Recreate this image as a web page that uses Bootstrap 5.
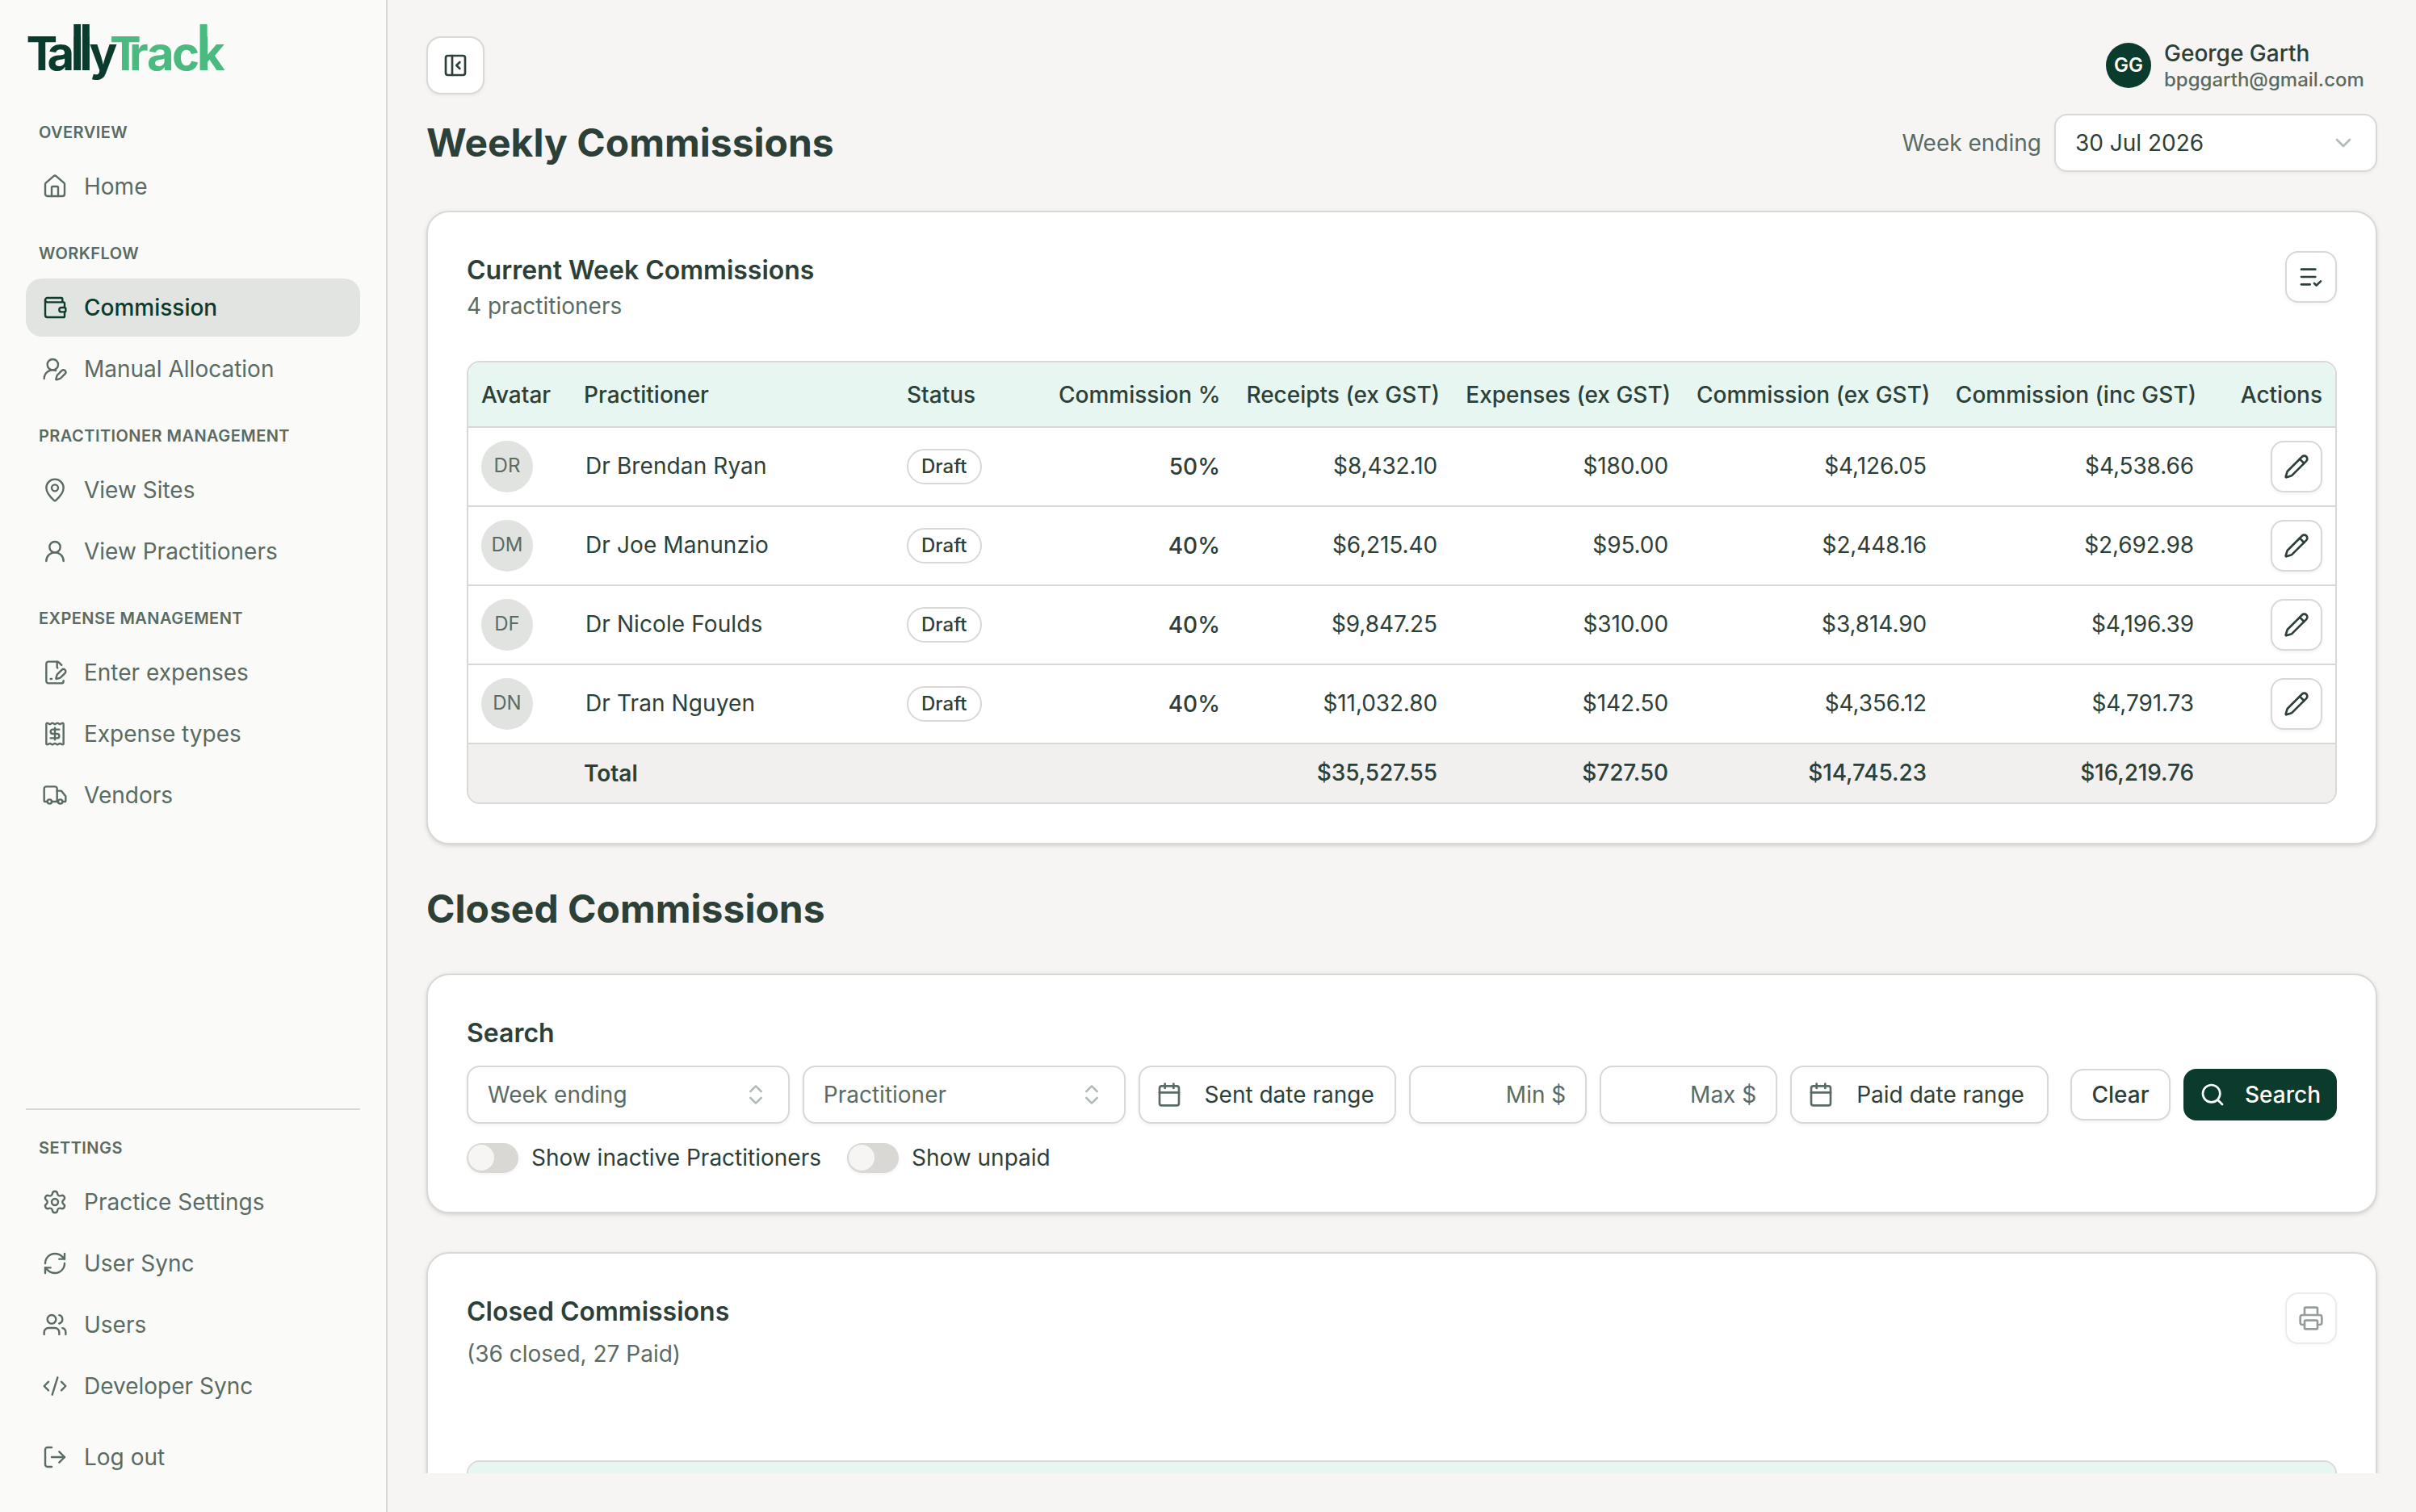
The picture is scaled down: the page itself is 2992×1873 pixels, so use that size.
<!DOCTYPE html>
<html lang="en">
<head>
    <meta charset="UTF-8">
    <meta name="viewport" content="width=device-width, initial-scale=1.0">
    <title>TallyTrack - Weekly Commissions</title>
    <link href="https://cdn.jsdelivr.net/npm/bootstrap@5.3.3/dist/css/bootstrap.min.css" rel="stylesheet">
    <style>
        :root {
            --ink: #2d4038;
            --brand: #0b3b2c;
            --soft: #5a6b63;
            --line: #d9d8d4;
        }

        body {
            height: 1873px;
            overflow: hidden;
            background-color: #f6f5f3;
            color: var(--ink);
            font-family: Inter, "Liberation Sans", sans-serif;
            font-size: 28px;
            line-height: 40px;
        }

        .icon {
            width: 32px;
            height: 32px;
            flex: none;
            fill: none;
            stroke: currentColor;
            stroke-width: 2;
            stroke-linecap: round;
            stroke-linejoin: round;
        }

        /* sidebar */
        .sidebar {
            width: 480px;
            height: 1873px;
            padding: 0 32px 32px;
            background-color: #fafaf8;
            border-right: 2px solid var(--line);
        }
        .brand-logo {
            display: block;
            width: 280px;
            height: 117px;
            margin-left: -32px;
            font-weight: 700;
            font-size: 58px;
        }
        .side-label {
            height: 64px;
            margin-top: 14px;
            padding-left: 16px;
            line-height: 66px;
            font-size: 20px;
            font-weight: 600;
            letter-spacing: .45px;
            text-transform: uppercase;
            color: var(--soft);
        }
        .side-menu {
            gap: 4px;
        }
        .side-menu .nav-link {
            display: flex;
            align-items: center;
            gap: 20px;
            height: 72px;
            padding: 0 20px;
            border-radius: 20px;
            color: var(--soft);
        }
        .side-menu .icon {
            stroke-width: 1.8;
        }
        .side-menu .nav-link.active {
            background-color: #e2e4e1;
            color: var(--brand);
            font-weight: 500;
        }
        .side-bottom {
            border-top: 2px solid var(--line);
        }

        /* main column */
        .content {
            height: 1825px;
            padding: 45px 48px 0;
            overflow: hidden;
        }
        .page-title {
            margin: 0;
            font-size: 48px;
            line-height: 64px;
            font-weight: 700;
        }
        .box-btn {
            display: flex;
            align-items: center;
            justify-content: center;
            width: 64px;
            height: 64px;
            padding: 0;
            background-color: #fff;
            border: 2px solid var(--line);
            border-radius: 16px;
            color: var(--ink);
            box-shadow: 0 2px 4px rgba(0, 0, 0, .05);
        }
        .box-btn.toggle {
            width: 72px;
            height: 72px;
            border-radius: 18px;
        }
        .user-pic {
            width: 56px;
            height: 56px;
            background-color: var(--brand);
            color: #fff;
            font-size: 24px;
            font-weight: 600;
        }
        .user-name,
        .user-mail {
            min-width: 248px;
            font-weight: 500;
        }
        .user-name { line-height: 36px; }
        .user-mail { font-size: 24px; line-height: 30px; }
        .field {
            display: flex;
            align-items: center;
            justify-content: space-between;
            height: 72px;
            padding: 0 24px;
            background-color: #fff;
            border: 2px solid var(--line);
            border-radius: 16px;
            box-shadow: 0 2px 4px rgba(0, 0, 0, .05);
            white-space: nowrap;
        }
        .field .caret {
            color: #b4bcb7;
        }
        .w-select { width: 400px; }
        .w-date { width: 320px; padding: 0 20px; justify-content: flex-start; gap: 28px; }
        .w-amount { width: 220px; justify-content: flex-end; }
        .soft { color: var(--soft); }

        .panel {
            padding: 48px;
            background-color: #fff;
            border: 2px solid var(--line);
            border-radius: 28px;
            box-shadow: 0 2px 6px rgba(0, 0, 0, .1), 0 2px 4px -2px rgba(0, 0, 0, .1);
        }
        .panel-title {
            margin: 0;
            font-size: 32px;
            line-height: 48px;
            font-weight: 600;
        }
        .closed-head { height: 208px; }

        /* commissions table */
        .grid-frame {
            border: 2px solid var(--line);
            border-radius: 16px;
            overflow: hidden;
        }
        .commissions {
            width: 100%;
            table-layout: fixed;
            border-collapse: separate;
            border-spacing: 0;
        }
        .commissions th,
        .commissions td {
            padding: 0 16px;
            white-space: nowrap;
            vertical-align: middle;
        }
        .commissions th {
            height: 81px;
            background-color: #e7f6f1;
            border-bottom: 2px solid var(--line);
            font-weight: 500;
        }
        .commissions tbody td {
            height: 98px;
            border-bottom: 2px solid var(--line);
        }
        .commissions tfoot td {
            height: 72px;
            background-color: #f1f0ee;
            font-weight: 500;
        }
        .commissions td.money {
            padding-right: 19px;
            padding-bottom: 2px;
            text-align: right;
            letter-spacing: -0.1px;
        }
        .commissions td.who {
            padding-left: 18px;
            padding-bottom: 2px;
            letter-spacing: .1px;
        }
        .initials {
            width: 64px;
            height: 64px;
            padding-bottom: 2px;
            background-color: #e1e3e0;
            color: var(--soft);
            font-size: 24px;
        }
        .state-pill {
            display: inline-block;
            height: 44px;
            padding: 0 16px;
            border: 2px solid var(--line);
            border-radius: 22px;
            font-size: 24px;
            font-weight: 500;
            line-height: 40px;
            vertical-align: middle;
        }

        /* search form */
        .search-btn {
            display: flex;
            align-items: center;
            height: 64px;
            padding: 0 20px;
            border-radius: 16px;
            gap: 24px;
            background-color: var(--brand);
            color: #fff;
            font-weight: 500;
        }
        .clear-btn {
            width: 124px;
            margin-left: 11px;
            font-size: 28px;
            font-weight: 500;
        }
        .switch-row {
            height: 37px;
        }
        .switch {
            width: 64px;
            height: 37px;
            padding: 2px;
            border-radius: 19px;
            background-color: var(--line);
            box-shadow: 0 2px 4px rgba(0, 0, 0, .05);
        }
        .switch::before {
            content: "";
            display: block;
            width: 32px;
            height: 32px;
            border-radius: 50%;
            background-color: #f6f5f3;
        }
        .switch-text {
            margin-right: 32px;
            padding-bottom: 2px;
        }
    </style>
</head>
<body>

    <!-- icon set -->
    <svg class="d-none">
        <symbol id="i-home" viewBox="0 0 24 24"><path d="M15 21v-8a1 1 0 0 0-1-1h-4a1 1 0 0 0-1 1v8"/><path d="M3 10a2 2 0 0 1 .709-1.528l7-6a2 2 0 0 1 2.582 0l7 6A2 2 0 0 1 21 10v9a2 2 0 0 1-2 2H5a2 2 0 0 1-2-2z"/></symbol>
        <symbol id="i-wallet" viewBox="0 0 24 24"><path d="M19 7V4a1 1 0 0 0-1-1H5a2 2 0 0 0 0 4h15a1 1 0 0 1 1 1v4h-3a2 2 0 0 0 0 4h3a1 1 0 0 0 1-1v-2a1 1 0 0 0-1-1"/><path d="M3 5v14a2 2 0 0 0 2 2h15a1 1 0 0 0 1-1v-4"/></symbol>
        <symbol id="i-user-pen" viewBox="0 0 24 24"><path d="M2 21a8 8 0 0 1 10.821-7.487"/><path d="M21.378 16.626a1 1 0 0 0-3.004-3.004l-4.01 4.012a2 2 0 0 0-.506.854l-.837 2.87a.5.5 0 0 0 .62.62l2.87-.837a2 2 0 0 0 .854-.506z"/><circle cx="10" cy="8" r="5"/></symbol>
        <symbol id="i-pin" viewBox="0 0 24 24"><path d="M20 10c0 4.993-5.539 10.193-7.399 11.799a1 1 0 0 1-1.202 0C9.539 20.193 4 14.993 4 10a8 8 0 0 1 16 0"/><circle cx="12" cy="10" r="3"/></symbol>
        <symbol id="i-user" viewBox="0 0 24 24"><circle cx="12" cy="8" r="5"/><path d="M20 21a8 8 0 0 0-16 0"/></symbol>
        <symbol id="i-file-pen" viewBox="0 0 24 24"><path d="M14.364 13.634a2 2 0 0 0-.506.854l-.837 2.87a.5.5 0 0 0 .62.62l2.87-.837a2 2 0 0 0 .854-.506l4.013-4.009a1 1 0 0 0-3.004-3.004z"/><path d="M14.487 7.858A1 1 0 0 1 14 7V2"/><path d="M20 19.645V20a2 2 0 0 1-2 2H6a2 2 0 0 1-2-2V4a2 2 0 0 1 2-2h8a2.4 2.4 0 0 1 1.704.706l2.516 2.516"/><path d="M8 18h1"/></symbol>
        <symbol id="i-receipt" viewBox="0 0 24 24"><path d="M4 3a1 1 0 0 1 1-1 1.3 1.3 0 0 1 .7.2l.933.6a1.3 1.3 0 0 0 1.4 0l.934-.6a1.3 1.3 0 0 1 1.4 0l.933.6a1.3 1.3 0 0 0 1.4 0l.933-.6a1.3 1.3 0 0 1 1.4 0l.934.6a1.3 1.3 0 0 0 1.4 0l.933-.6A1.3 1.3 0 0 1 19 2a1 1 0 0 1 1 1v18a1 1 0 0 1-1 1 1.3 1.3 0 0 1-.7-.2l-.933-.6a1.3 1.3 0 0 0-1.4 0l-.934.6a1.3 1.3 0 0 1-1.4 0l-.933-.6a1.3 1.3 0 0 0-1.4 0l-.933.6a1.3 1.3 0 0 1-1.4 0l-.934-.6a1.3 1.3 0 0 0-1.4 0l-.933.6a1.3 1.3 0 0 1-.7.2 1 1 0 0 1-1-1z"/><path d="M16 8h-6a2 2 0 1 0 0 4h4a2 2 0 1 1 0 4H8"/><path d="M12 17.5v-11"/></symbol>
        <symbol id="i-truck" viewBox="0 0 24 24"><path d="M14 18V6a2 2 0 0 0-2-2H4a2 2 0 0 0-2 2v11a1 1 0 0 0 1 1h2"/><path d="M15 18H9"/><path d="M19 18h2a1 1 0 0 0 1-1v-3.65a1 1 0 0 0-.22-.624l-3.48-4.35A1 1 0 0 0 17.52 8H14"/><circle cx="17" cy="18" r="2"/><circle cx="7" cy="18" r="2"/></symbol>
        <symbol id="i-gear" viewBox="0 0 24 24"><path d="M9.671 4.136a2.34 2.34 0 0 1 4.659 0 2.34 2.34 0 0 0 3.319 1.915 2.34 2.34 0 0 1 2.33 4.033 2.34 2.34 0 0 0 0 3.831 2.34 2.34 0 0 1-2.33 4.033 2.34 2.34 0 0 0-3.319 1.915 2.34 2.34 0 0 1-4.659 0 2.34 2.34 0 0 0-3.32-1.915 2.34 2.34 0 0 1-2.33-4.033 2.34 2.34 0 0 0 0-3.831A2.34 2.34 0 0 1 6.35 6.051a2.34 2.34 0 0 0 3.319-1.915"/><circle cx="12" cy="12" r="3"/></symbol>
        <symbol id="i-sync" viewBox="0 0 24 24"><path d="M3 12a9 9 0 0 1 9-9 9.75 9.75 0 0 1 6.74 2.74L21 8"/><path d="M21 3v5h-5"/><path d="M21 12a9 9 0 0 1-9 9 9.75 9.75 0 0 1-6.74-2.74L3 16"/><path d="M8 16H3v5"/></symbol>
        <symbol id="i-users" viewBox="0 0 24 24"><path d="M16 21v-2a4 4 0 0 0-4-4H6a4 4 0 0 0-4 4v2"/><path d="M16 3.128a4 4 0 0 1 0 7.744"/><path d="M22 21v-2a4 4 0 0 0-3-3.87"/><circle cx="9" cy="7" r="4"/></symbol>
        <symbol id="i-code" viewBox="0 0 24 24"><path d="m18 16 4-4-4-4"/><path d="m6 8-4 4 4 4"/><path d="m14.5 4-5 16"/></symbol>
        <symbol id="i-logout" viewBox="0 0 24 24"><path d="m16 17 5-5-5-5"/><path d="M21 12H9"/><path d="M9 21H5a2 2 0 0 1-2-2V5a2 2 0 0 1 2-2h4"/></symbol>
        <symbol id="i-panel" viewBox="0 0 24 24"><rect width="18" height="18" x="3" y="3" rx="2"/><path d="M9 3v18"/><path d="m16 15-3-3 3-3"/></symbol>
        <symbol id="i-down" viewBox="0 0 24 24"><path d="m6 9 6 6 6-6"/></symbol>
        <symbol id="i-updown" viewBox="0 0 24 24"><path d="m7 15 5 5 5-5"/><path d="m7 9 5-5 5 5"/></symbol>
        <symbol id="i-list-check" viewBox="0 0 24 24"><path d="M16 5H3"/><path d="M16 12H3"/><path d="M11 19H3"/><path d="m15 18 2 2 4-4"/></symbol>
        <symbol id="i-pencil" viewBox="0 0 24 24"><path d="M21.174 6.812a1 1 0 0 0-3.986-3.987L3.842 16.174a2 2 0 0 0-.5.83l-1.321 4.352a.5.5 0 0 0 .623.622l4.353-1.32a2 2 0 0 0 .83-.497z"/><path d="m15 5 4 4"/></symbol>
        <symbol id="i-calendar" viewBox="0 0 24 24"><path d="M8 2v4"/><path d="M16 2v4"/><rect width="18" height="18" x="3" y="4" rx="2"/><path d="M3 10h18"/></symbol>
        <symbol id="i-search" viewBox="0 0 24 24"><circle cx="11" cy="11" r="8"/><path d="m21 21-4.34-4.34"/></symbol>
        <symbol id="i-printer" viewBox="0 0 24 24"><path d="M6 18H4a2 2 0 0 1-2-2v-5a2 2 0 0 1 2-2h16a2 2 0 0 1 2 2v5a2 2 0 0 1-2 2h-2"/><path d="M6 9V3a1 1 0 0 1 1-1h10a1 1 0 0 1 1 1v6"/><rect x="6" y="14" width="12" height="8" rx="1"/></symbol>
    </svg>

    <div class="d-flex">
        <aside class="sidebar d-flex flex-column flex-shrink-0">
            <!-- wordmark with tall stems on the l, l and k -->
            <svg class="brand-logo" viewBox="0 0 280 117">
                <text x="32.5 58.5 88 98.6 110.5 136 160 182 213 245" y="87" fill="#0b3b2c">Tally<tspan fill="#4aba80">Track</tspan></text>
                <rect x="91.3" y="30" width="8.8" height="57" fill="#0b3b2c"/>
                <rect x="102" y="30" width="8.8" height="57" fill="#0b3b2c"/>
                <rect x="247.6" y="30" width="9" height="57" fill="#4aba80"/>
            </svg>

            <div class="side-label">Overview</div>
            <nav class="side-menu nav flex-column">
                <a class="nav-link" href="#"><svg class="icon"><use href="#i-home"/></svg>Home</a>
            </nav>
            <div class="side-label">Workflow</div>
            <nav class="side-menu nav flex-column">
                <a class="nav-link active" href="#"><svg class="icon"><use href="#i-wallet"/></svg>Commission</a>
                <a class="nav-link" href="#"><svg class="icon"><use href="#i-user-pen"/></svg>Manual Allocation</a>
            </nav>
            <div class="side-label">Practitioner Management</div>
            <nav class="side-menu nav flex-column">
                <a class="nav-link" href="#"><svg class="icon"><use href="#i-pin"/></svg>View Sites</a>
                <a class="nav-link" href="#"><svg class="icon"><use href="#i-user"/></svg>View Practitioners</a>
            </nav>
            <div class="side-label">Expense Management</div>
            <nav class="side-menu nav flex-column">
                <a class="nav-link" href="#"><svg class="icon"><use href="#i-file-pen"/></svg>Enter expenses</a>
                <a class="nav-link" href="#"><svg class="icon"><use href="#i-receipt"/></svg>Expense types</a>
                <a class="nav-link" href="#"><svg class="icon"><use href="#i-truck"/></svg>Vendors</a>
            </nav>

            <div class="side-bottom mt-auto">
                <div class="side-label">Settings</div>
                <nav class="side-menu nav flex-column">
                    <a class="nav-link" href="#"><svg class="icon"><use href="#i-gear"/></svg>Practice Settings</a>
                    <a class="nav-link" href="#"><svg class="icon"><use href="#i-sync"/></svg>User Sync</a>
                    <a class="nav-link" href="#"><svg class="icon"><use href="#i-users"/></svg>Users</a>
                    <a class="nav-link" href="#"><svg class="icon"><use href="#i-code"/></svg>Developer Sync</a>
                </nav>
                <nav class="side-menu nav flex-column mt-3">
                    <a class="nav-link" href="#"><svg class="icon"><use href="#i-logout"/></svg>Log out</a>
                </nav>
            </div>
        </aside>

        <main class="content flex-grow-1">
            <header class="d-flex justify-content-between align-items-center mb-4">
                <button class="box-btn toggle" type="button" aria-label="Collapse sidebar"><svg class="icon"><use href="#i-panel"/></svg></button>
                <div class="d-flex align-items-center gap-3 pe-3">
                    <div class="user-pic rounded-circle d-flex align-items-center justify-content-center">GG</div>
                    <div>
                        <div class="user-name">George Garth</div>
                        <div class="user-mail soft">bpggarth@gmail.com</div>
                    </div>
                </div>
            </header>

            <div class="d-flex justify-content-between align-items-center mb-5">
                <h1 class="page-title">Weekly Commissions</h1>
                <div class="d-flex align-items-center gap-3">
                    <span class="soft">Week ending</span>
                    <div class="field w-select">30 Jul 2026<svg class="icon caret"><use href="#i-down"/></svg></div>
                </div>
            </div>

            <section class="panel">
                <div class="d-flex justify-content-between align-items-start mb-5">
                    <div>
                        <h2 class="panel-title">Current Week Commissions</h2>
                        <div class="soft">4 practitioners</div>
                    </div>
                    <button class="box-btn" type="button" aria-label="Review list"><svg class="icon"><use href="#i-list-check"/></svg></button>
                </div>
                <div class="grid-frame">
                    <table class="commissions">
                        <colgroup>
                            <col style="width:127px"><col style="width:400px"><col style="width:188px">
                            <col style="width:232px"><col style="width:272px"><col style="width:286px">
                            <col style="width:320px"><col style="width:331px"><col style="width:156px">
                        </colgroup>
                        <thead>
                            <tr>
                                <th>Avatar</th>
                                <th>Practitioner</th>
                                <th>Status</th>
                                <th class="text-end">Commission %</th>
                                <th class="text-end">Receipts (ex GST)</th>
                                <th class="text-end">Expenses (ex GST)</th>
                                <th class="text-end">Commission (ex GST)</th>
                                <th class="text-end">Commission (inc GST)</th>
                                <th class="text-end">Actions</th>
                            </tr>
                        </thead>
                        <tbody id="commission-rows"></tbody>
                        <tfoot>
                            <tr>
                                <td></td>
                                <td class="fw-semibold">Total</td>
                                <td></td>
                                <td></td>
                                <td class="money">$35,527.55</td>
                                <td class="money">$727.50</td>
                                <td class="money">$14,745.23</td>
                                <td class="money">$16,219.76</td>
                                <td></td>
                            </tr>
                        </tfoot>
                    </table>
                </div>
            </section>

            <h1 class="page-title my-5">Closed Commissions</h1>

            <section class="panel mb-5">
                <h2 class="panel-title mb-3">Search</h2>
                <div class="d-flex align-items-center gap-3 mb-4">
                    <div class="field w-select soft">Week ending<svg class="icon caret"><use href="#i-updown"/></svg></div>
                    <div class="field w-select soft">Practitioner<svg class="icon caret"><use href="#i-updown"/></svg></div>
                    <div class="field w-date"><svg class="icon soft"><use href="#i-calendar"/></svg>Sent date range</div>
                    <div class="field w-amount soft">Min $</div>
                    <div class="field w-amount soft">Max $</div>
                    <div class="field w-date"><svg class="icon soft"><use href="#i-calendar"/></svg>Paid date range</div>
                    <button class="box-btn clear-btn" type="button">Clear</button>
                    <div class="search-btn"><svg class="icon"><use href="#i-search"/></svg>Search</div>
                </div>
                <div class="d-flex align-items-center switch-row">
                    <span class="switch me-3"></span>
                    <span class="switch-text">Show inactive Practitioners</span>
                    <span class="switch me-3"></span>
                    <span class="switch-text">Show unpaid</span>
                </div>
            </section>

            <section class="panel">
                <div class="d-flex justify-content-between align-items-start closed-head">
                    <div>
                        <h2 class="panel-title mb-2">Closed Commissions</h2>
                        <div class="soft">(36 closed, 27 Paid)</div>
                    </div>
                    <button class="box-btn opacity-50" type="button" aria-label="Print"><svg class="icon"><use href="#i-printer"/></svg></button>
                </div>
                <div class="grid-frame">
                    <table class="commissions">
                        <thead><tr><th></th></tr></thead>
                    </table>
                </div>
            </section>
        </main>
    </div>

    <script src="https://cdn.jsdelivr.net/npm/bootstrap@5.3.3/dist/js/bootstrap.bundle.min.js"></script>
    <script>
        const practitioners = [
            { initials: 'DR', name: 'Dr Brendan Ryan', rate: '50%', amounts: ['$8,432.10', '$180.00', '$4,126.05', '$4,538.66'] },
            { initials: 'DM', name: 'Dr Joe Manunzio', rate: '40%', amounts: ['$6,215.40', '$95.00', '$2,448.16', '$2,692.98'] },
            { initials: 'DF', name: 'Dr Nicole Foulds', rate: '40%', amounts: ['$9,847.25', '$310.00', '$3,814.90', '$4,196.39'] },
            { initials: 'DN', name: 'Dr Tran Nguyen', rate: '40%', amounts: ['$11,032.80', '$142.50', '$4,356.12', '$4,791.73'] }
        ];

        document.getElementById('commission-rows').innerHTML = practitioners.map(p => `
            <tr>
                <td><div class="initials rounded-circle d-flex align-items-center justify-content-center">${p.initials}</div></td>
                <td class="who">${p.name}</td>
                <td><span class="state-pill">Draft</span></td>
                <td class="text-end fw-medium">${p.rate}</td>
                ${p.amounts.map(a => `<td class="money">${a}</td>`).join('')}
                <td><button class="box-btn ms-auto" type="button" aria-label="Edit"><svg class="icon"><use href="#i-pencil"/></svg></button></td>
            </tr>`).join('');
    </script>
</body>
</html>
